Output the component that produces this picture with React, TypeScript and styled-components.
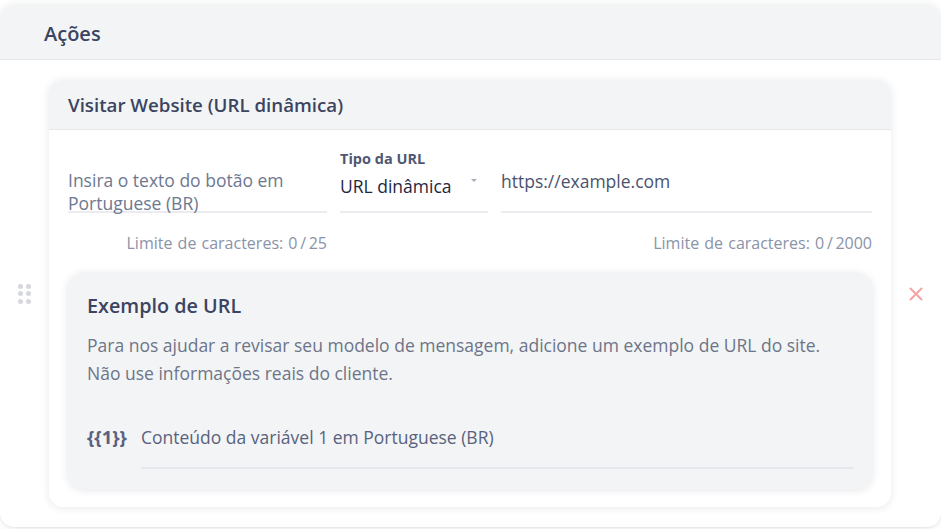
import React from "react";
import styled, { createGlobalStyle } from "styled-components";

const Global = createGlobalStyle`
  html, body { margin: 0; padding: 0; background: #ffffff; }
  body { font-family: "Open Sans", "Noto Sans", sans-serif; -webkit-font-smoothing: antialiased; }
  * { box-sizing: border-box; }
`;

const Page = styled.div`
  padding: 5px 0 3px 0;
  width: 941px;
`;

const Card = styled.section`
  background: #ffffff;
  border-radius: 14px;
  box-shadow: 0 0 8px rgba(30, 40, 70, 0.09), 0 1px 2px rgba(30, 40, 70, 0.08);
  overflow: hidden;
`;

const CardHeader = styled.header`
  height: 55px;
  padding: 2px 44px 0 44px;
  display: flex;
  align-items: center;
  background: #f3f4f6;
  border-bottom: 1px solid #e6e7eb;
  font-size: 20px;
  font-weight: 600;
  color: #3b4460;
`;

const ActionRow = styled.div`
  display: grid;
  grid-template-columns: 49px 1fr 50px;
  align-items: center;
  padding: 20px 0 20px 0;
`;

const HandleCell = styled.div`
  display: flex;
  justify-content: center;
`;

const Handle = styled.div`
  display: grid;
  grid-template-columns: repeat(2, 5px);
  grid-auto-rows: 5px;
  gap: 2.5px;
  span {
    width: 5px;
    height: 5px;
    border-radius: 50%;
    background: #d6d8de;
  }
`;

const RemoveCell = styled.button`
  border: 0;
  background: transparent;
  padding: 0;
  display: flex;
  justify-content: center;
  align-items: center;
  cursor: pointer;
`;

const ActionCard = styled.div`
  background: #ffffff;
  border-radius: 14px;
  box-shadow: 0 1px 9px rgba(30, 40, 70, 0.1);
  overflow: hidden;
`;

const ActionHeader = styled.div`
  height: 50px;
  padding: 0 19px;
  display: flex;
  align-items: center;
  background: #f3f4f6;
  border-bottom: 1px solid #e6e7eb;
  font-size: 18.7px;
  font-weight: 600;
  color: #3b4460;
`;

const ActionBody = styled.div`
  padding: 20px 19px 18px 19px;
`;

const FieldGrid = styled.div`
  display: grid;
  grid-template-columns: 259px 148px 1fr;
  column-gap: 13px;
  align-items: end;
`;

const Field = styled.div`
  position: relative;
  height: 63px;
  border-bottom: 2px solid #ebebf0;
`;

const PlaceholderText = styled.div`
  padding-top: 19px;
  font-size: 17.5px;
  line-height: 23px;
  color: #6d7890;
`;

const UrlText = styled.div`
  padding-top: 19px;
  font-size: 17.5px;
  line-height: 24px;
  color: #4a536d;
`;

const SelectLabel = styled.div`
  font-size: 14.5px;
  font-weight: 700;
  line-height: 18px;
  color: #4f5873;
`;

const SelectValue = styled.div`
  display: flex;
  align-items: center;
  justify-content: space-between;
  padding-top: 6px;
  font-size: 17.5px;
  line-height: 24px;
  color: #1f2640;
`;

const Caret = styled.span`
  width: 0;
  height: 0;
  margin-right: 11px;
  margin-top: -12px;
  border-left: 3.5px solid transparent;
  border-right: 3.5px solid transparent;
  border-top: 3.5px solid #a9aebb;
`;

const LimitGrid = styled.div`
  display: grid;
  grid-template-columns: 259px 148px 1fr;
  column-gap: 13px;
  margin-top: 20px;
`;

const Limit = styled.div`
  text-align: right;
  font-size: 16px;
  line-height: 20px;
  color: #8a93a8;
  word-spacing: 1px;
`;

const ExampleCard = styled.div`
  margin-top: 20px;
  background: #f3f4f6;
  border-radius: 16px;
  box-shadow: 0 1px 9px rgba(30, 40, 70, 0.12);
  padding: 20px 18px 20px 19px;
`;

const ExampleTitle = styled.h3`
  margin: 0;
  font-size: 19.8px;
  line-height: 26px;
  font-weight: 600;
  color: #3b4460;
`;

const ExampleText = styled.p`
  margin: 12px 0 0 0;
  font-size: 17.5px;
  line-height: 28px;
  color: #6d7588;
`;

const VariableRow = styled.div`
  margin-top: 38px;
  display: flex;
  align-items: flex-start;
`;

const VariableTag = styled.span`
  width: 54px;
  flex: none;
  font-size: 18.6px;
  line-height: 24px;
  font-weight: 700;
  color: #59627d;
`;

const VariableInput = styled.div`
  flex: 1;
  padding-bottom: 18px;
  border-bottom: 2px solid #e7e8ed;
  font-size: 17.5px;
  line-height: 24px;
  color: #59627d;
`;

export default function App() {
  return (
    <Page>
      <Global />
      <Card>
        <CardHeader>Ações</CardHeader>
        <ActionRow>
          <HandleCell>
            <Handle>
              <span />
              <span />
              <span />
              <span />
              <span />
              <span />
            </Handle>
          </HandleCell>
          <ActionCard>
            <ActionHeader>Visitar Website (URL dinâmica)</ActionHeader>
            <ActionBody>
              <FieldGrid>
                <Field>
                  <PlaceholderText>Insira o texto do botão em Portuguese (BR)</PlaceholderText>
                </Field>
                <Field>
                  <SelectLabel>Tipo da URL</SelectLabel>
                  <SelectValue>
                    URL dinâmica
                    <Caret />
                  </SelectValue>
                </Field>
                <Field>
                  <UrlText>https://example.com</UrlText>
                </Field>
              </FieldGrid>
              <LimitGrid>
                <Limit>Limite de caracteres: 0{"\u2009/\u2009"}25</Limit>
                <span />
                <Limit>Limite de caracteres: 0{"\u2009/\u2009"}2000</Limit>
              </LimitGrid>
              <ExampleCard>
                <ExampleTitle>Exemplo de URL</ExampleTitle>
                <ExampleText>
                  Para nos ajudar a revisar seu modelo de mensagem, adicione um exemplo de URL do site.
                  <br />
                  Não use informações reais do cliente.
                </ExampleText>
                <VariableRow>
                  <VariableTag>{"{{1}}"}</VariableTag>
                  <VariableInput>Conteúdo da variável 1 em Portuguese (BR)</VariableInput>
                </VariableRow>
              </ExampleCard>
            </ActionBody>
          </ActionCard>
          <RemoveCell aria-label="Remover">
            <svg width="16" height="16" viewBox="0 0 16 16">
              <path d="M2.5 2.5 L13.5 13.5 M13.5 2.5 L2.5 13.5" stroke="#f8a3a3" strokeWidth="2" strokeLinecap="round" />
            </svg>
          </RemoveCell>
        </ActionRow>
      </Card>
    </Page>
  );
}
